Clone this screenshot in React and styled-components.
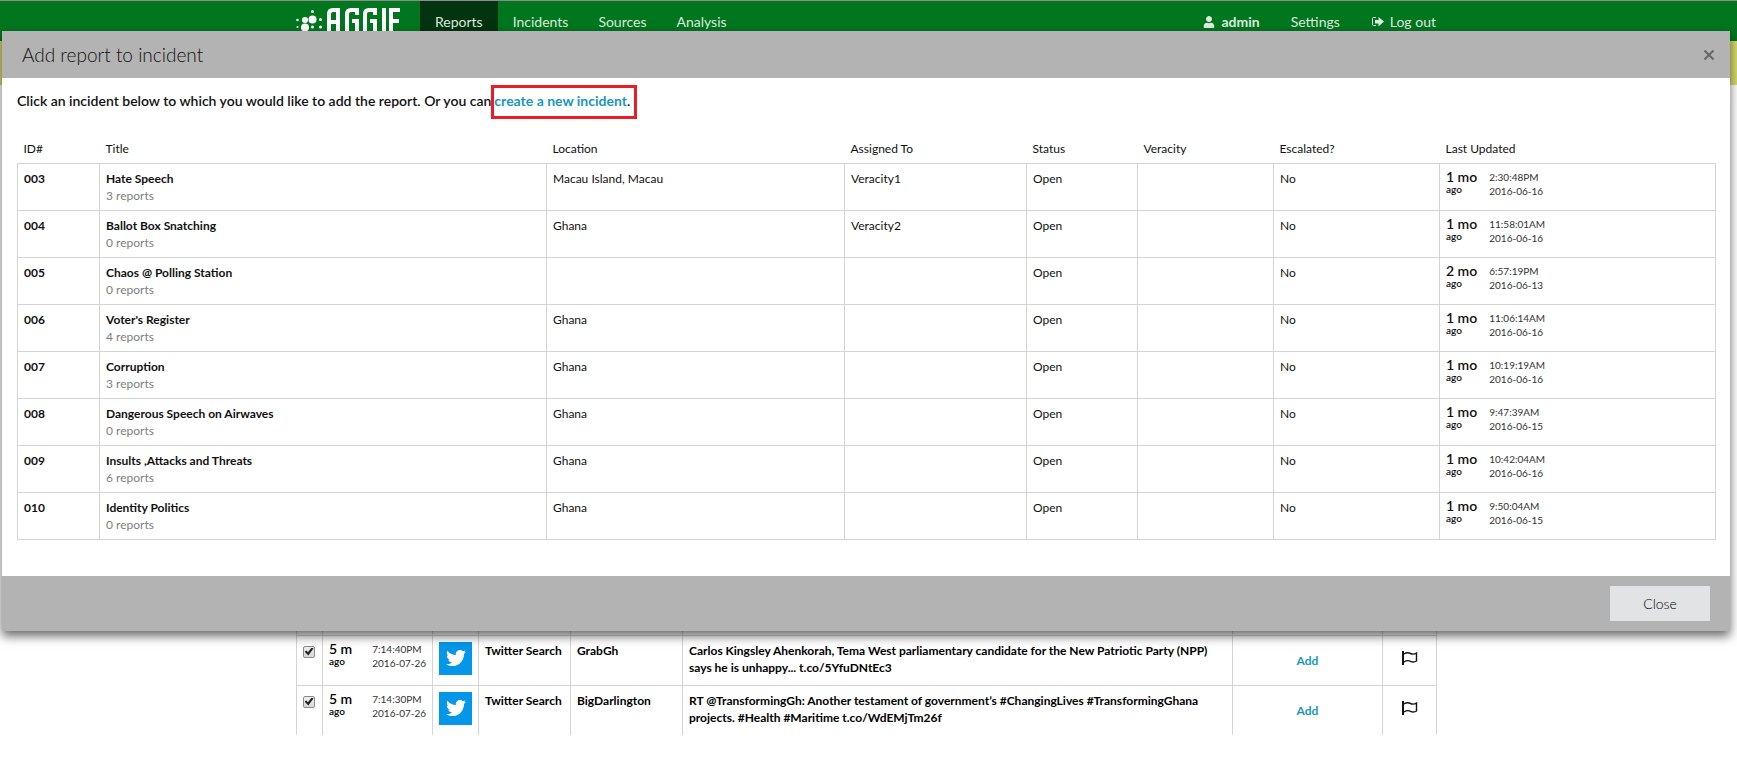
import React from "react";
import styled, { createGlobalStyle } from "styled-components";
import { FaUser, FaTwitter } from "react-icons/fa";

const GlobalStyle = createGlobalStyle`
  * { box-sizing: border-box; }
  body {
    margin: 0;
    background: #fff;
    color: #111;
    font: 14px/20px Lato, "Liberation Sans", sans-serif;
  }
  a { text-decoration: none; }
`;

const Page = styled.div`
  position: relative;
  min-height: 100vh;
`;

const NavBar = styled.header`
  height: 41px;
  overflow: hidden;
  background: #00761f;
  border-top: 1px solid #8c8c8c;
  padding-right: 4px;
`;

const Container = styled.div`
  max-width: 1141px;
  margin: 0 auto;
`;

const NavInner = styled(Container)`
  display: flex;
  align-items: flex-start;
`;

const Brand = styled.a`
  display: block;
  width: 124px;
  height: 40px;
`;

const NavGroup = styled.nav`
  display: flex;
  margin-left: ${(p) => (p.$end ? "auto" : "0")};
  padding-right: ${(p) => (p.$end ? "1px" : "0")};
  gap: ${(p) => (p.$end ? "31px" : "0")};
`;

const NavLink = styled.a`
  display: flex;
  align-items: center;
  gap: 6px;
  height: 42px;
  padding: ${(p) => (p.$flush ? "0" : "0 15px")};
  color: #dcebdc;
  background: ${(p) => (p.$active ? "#03330f" : "transparent")};
  font-weight: ${(p) => (p.$strong ? 700 : 400)};
`;

const SubBar = styled.div`
  height: 44px;
  background: #d6d96c;
`;

const Main = styled.main`
  padding: 540px 4px 31px 0;
`;

const Table = styled.table`
  width: 100%;
  table-layout: fixed;
  border-collapse: collapse;
  font-size: 12px;
  line-height: 17px;
`;

const Th = styled.th`
  padding: 7px 6px 6px;
  height: 30px;
  font-weight: 400;
  text-align: left;
  vertical-align: top;
`;

const Td = styled.td`
  height: 47px;
  padding: 6px;
  border: 1px solid #d4d4d4;
  vertical-align: top;
  font-weight: ${(p) => (p.$strong ? 700 : 400)};
`;

const ReportTable = styled(Table)`
  color: #000;
  td {
    height: 50px;
    border-bottom: 0;
    font-weight: 700;
  }
`;

const SpacerRow = styled.tr`
  td {
    height: 10px;
    padding: 0;
    border-top: 0;
  }
`;

const CenterTd = styled(Td)`
  text-align: center;
  vertical-align: middle;
`;

const Count = styled.div`
  color: #808080;
  font-weight: 400;
`;

const TimeBox = styled.div`
  display: flex;
  gap: ${(p) => (p.$wide ? "20px" : "12px")};
  white-space: nowrap;
`;

const Ago = styled.div`
  font-size: 10px;
  line-height: 10px;
  font-weight: 600;
  strong {
    display: block;
    font-size: 14px;
    line-height: 14px;
    font-weight: 600;
  }
`;

const Stamp = styled.div`
  font-size: 10px;
  line-height: 14px;
  font-weight: 400;
  color: #333;
`;

const Check = styled.input`
  appearance: none;
  display: grid;
  place-items: center;
  width: 12px;
  height: 12px;
  margin: 4px 0 0;
  border: 1px solid #8a8a8a;
  border-radius: 2px;
  background: linear-gradient(#eee, #d8d8d8);
  &:checked::before {
    content: "";
    width: 9px;
    height: 8px;
    background: #222;
    clip-path: polygon(0 50%, 20% 38%, 38% 58%, 80% 0, 100% 12%, 42% 100%);
  }
`;

const Tile = styled.div`
  display: grid;
  place-items: center;
  width: 33px;
  height: 33px;
  background: #0496e8;
  color: #fff;
  font-size: 20px;
`;

const Link = styled.a`
  color: #1897bd;
  font-weight: 700;
`;

const Dialog = styled.section`
  position: absolute;
  top: 31px;
  left: 2px;
  right: 7px;
  background: #fff;
  box-shadow: 0 5px 10px rgba(0, 0, 0, 0.6);
`;

const DialogHead = styled.div`
  display: flex;
  align-items: center;
  justify-content: space-between;
  height: 47px;
  padding: 0 15px 0 20px;
  background: #b3b3b3;
`;

const DialogTitle = styled.h1`
  margin: 0;
  font-size: 19px;
  line-height: 24px;
  font-weight: 300;
`;

const IconButton = styled.button`
  display: grid;
  padding: 0;
  border: 0;
  background: none;
  color: #666;
`;

const DialogBody = styled.div`
  padding: 8px 14px 36px 15px;
`;

const Lead = styled.p`
  display: flex;
  align-items: center;
  height: 32px;
  margin: 0 0 15px;
  font-weight: 600;
  white-space: pre;
`;

const LeadText = styled.span`
  padding-bottom: 2px;
`;

const Highlight = styled.span`
  display: flex;
  align-items: center;
  height: 34px;
  padding: 0 4px 2px 0;
  border: 3px solid #ed1c24;
`;

const DialogFoot = styled.div`
  display: flex;
  align-items: center;
  justify-content: flex-end;
  height: 55px;
  padding: 0 20px;
  background: #b3b3b3;
`;

const CloseButton = styled.button`
  width: 100px;
  height: 35px;
  padding: 1px 0 0;
  border: 0;
  background: #e1e3e5;
  color: #000;
  font: 300 14px/20px Lato, "Liberation Sans", sans-serif;
`;

const incidents = [
  ["003", "Hate Speech", 3, "Macau Island, Macau", "Veracity1", "1 mo", "2:30:48PM", "2016-06-16"],
  ["004", "Ballot Box Snatching", 0, "Ghana", "Veracity2", "1 mo", "11:58:01AM", "2016-06-16"],
  ["005", "Chaos @ Polling Station", 0, "", "", "2 mo", "6:57:19PM", "2016-06-13"],
  ["006", "Voter's Register", 4, "Ghana", "", "1 mo", "11:06:14AM", "2016-06-16"],
  ["007", "Corruption", 3, "Ghana", "", "1 mo", "10:19:19AM", "2016-06-16"],
  ["008", "Dangerous Speech on Airwaves", 0, "Ghana", "", "1 mo", "9:47:39AM", "2016-06-15"],
  ["009", "Insults ,Attacks and Threats", 6, "Ghana", "", "1 mo", "10:42:04AM", "2016-06-16"],
  ["010", "Identity Politics", 0, "Ghana", "", "1 mo", "9:50:04AM", "2016-06-15"],
];

const reports = [
  ["7:14:40PM", "GrabGh", "Carlos Kingsley Ahenkorah, Tema West parliamentary candidate for the New Patriotic Party (NPP) says he is unhappy... t.co/5YfuDNtEc3"],
  ["7:14:30PM", "BigDarlington", "RT @TransformingGh: Another testament of government’s #ChangingLives #TransformingGhana projects. #Health #Maritime t.co/WdEMjTm26f"],
];

const headings = ["ID#", "Title", "Location", "Assigned To", "Status", "Veracity", "Escalated?", "Last Updated"];
const incidentCols = [82, null, 298, 182, 111, 136, 166, 276];
const reportCols = [26, 110, 46, 92, 112, null, 150, 54];

function Cols({ widths }) {
  return (
    <colgroup>
      {widths.map((w, i) => (
        <col key={i} width={w ?? undefined} />
      ))}
    </colgroup>
  );
}

function Time({ ago, time, date, wide }) {
  return (
    <TimeBox $wide={wide}>
      <Ago>
        <strong>{ago}</strong>ago
      </Ago>
      <Stamp>
        {time}
        <br />
        {date}
      </Stamp>
    </TimeBox>
  );
}

function Logo() {
  return (
    <svg width="106" height="40" viewBox="0 0 106 40" fill="#fff" aria-hidden="true">
      <circle cx="1.5" cy="19" r="1.3" />
      <circle cx="1.5" cy="26" r="1" />
      <circle cx="9" cy="19" r="3" />
      <circle cx="9" cy="26.5" r="4" />
      <circle cx="16.5" cy="18.5" r="4" />
      <circle cx="16.5" cy="26" r="1.5" />
      <circle cx="16.5" cy="10.5" r="1.5" />
      <circle cx="24.5" cy="18.5" r="1.5" />
      <circle cx="24.5" cy="26" r="1.5" />
      <g fill="none" stroke="#fff" strokeWidth="4">
        <path d="M33 32V13q0-4 4-4h5V32M33 21h9" />
        <path d="M61 14V9h-6q-4 0-4 4v19M56 20h5v12" />
        <path d="M79 14V9h-6q-4 0-4 4v19M74 20h5v12" />
        <path d="M88 7v25M104 9h-9v23M95 20h8" />
      </g>
    </svg>
  );
}

function LogoutIcon() {
  return (
    <svg width="13" height="12" viewBox="0 0 13 12" fill="currentColor" aria-hidden="true">
      <path d="M5 1.5H2.5Q1.5 1.5 1.5 2.5v6Q1.5 9.5 2.5 9.5H5" fill="none" stroke="currentColor" />
      <path d="M4 4h3.5V1L13 5.5 7.5 10.5V7.5H4z" />
    </svg>
  );
}

function FlagIcon() {
  return (
    <svg width="16" height="14" viewBox="0 0 16 14" fill="none" stroke="#111" aria-label="Flag">
      <path d="M1 0v14" strokeWidth="2" />
      <path d="M2 3C4.5 1.3 6.5 1.5 8.5 2.5s4 .8 6-.5v8c-2 1.3-4 1.3-6 .3S4.500 9.300 2 11" strokeWidth="1.4" />
    </svg>
  );
}

export default function App() {
  return (
    <Page>
      <GlobalStyle />
      <NavBar>
        <NavInner>
          <Brand href="#" aria-label="Aggie">
            <Logo />
          </Brand>
          <NavGroup>
            <NavLink href="#" $active>Reports</NavLink>
            <NavLink href="#">Incidents</NavLink>
            <NavLink href="#">Sources</NavLink>
            <NavLink href="#">Analysis</NavLink>
          </NavGroup>
          <NavGroup $end>
            <NavLink href="#" $flush $strong><FaUser size={12} />admin</NavLink>
            <NavLink href="#" $flush>Settings</NavLink>
            <NavLink href="#" $flush><LogoutIcon />Log out</NavLink>
          </NavGroup>
        </NavInner>
      </NavBar>
      <SubBar />
      <Main>
        <Container>
          <ReportTable>
            <Cols widths={reportCols} />
            <tbody>
              <SpacerRow aria-hidden="true">
                {reportCols.map((_, i) => <Td key={i} />)}
              </SpacerRow>
              {reports.map(([time, author, text]) => (
                <tr key={time}>
                  <Td><Check type="checkbox" defaultChecked aria-label={`Select report by ${author}`} /></Td>
                  <Td><Time ago="5 m" time={time} date="2016-07-26" wide /></Td>
                  <Td><Tile><FaTwitter /></Tile></Td>
                  <Td>Twitter Search</Td>
                  <Td>{author}</Td>
                  <Td>{text}</Td>
                  <CenterTd><Link href="#">Add</Link></CenterTd>
                  <CenterTd><FlagIcon /></CenterTd>
                </tr>
              ))}
            </tbody>
          </ReportTable>
        </Container>
      </Main>

      <Dialog role="dialog" aria-labelledby="dialog-title">
        <DialogHead>
          <DialogTitle id="dialog-title">Add report to incident</DialogTitle>
          <IconButton type="button" aria-label="Dismiss">
            <svg width="12" height="12" viewBox="0 0 12 12" stroke="currentColor" strokeWidth="2">
              <path d="M1.5 1.5l9 9M10.5 1.5l-9 9" />
            </svg>
          </IconButton>
        </DialogHead>
        <DialogBody>
          <Lead>
            <LeadText>Click an incident below to which you would like to add the report. Or you can</LeadText>
            <Highlight><Link href="#">create a new incident</Link>.</Highlight>
          </Lead>
          <Table>
            <Cols widths={incidentCols} />
            <thead>
              <tr>{headings.map((h) => <Th key={h} scope="col">{h}</Th>)}</tr>
            </thead>
            <tbody>
              {incidents.map(([id, title, count, place, user, ago, time, date]) => (
                <tr key={id}>
                  <Td $strong>{id}</Td>
                  <Td $strong>{title}<Count>{count} reports</Count></Td>
                  <Td>{place}</Td>
                  <Td>{user}</Td>
                  <Td>Open</Td>
                  <Td />
                  <Td>No</Td>
                  <Td><Time ago={ago} time={time} date={date} /></Td>
                </tr>
              ))}
            </tbody>
          </Table>
        </DialogBody>
        <DialogFoot>
          <CloseButton type="button">Close</CloseButton>
        </DialogFoot>
      </Dialog>
    </Page>
  );
}
